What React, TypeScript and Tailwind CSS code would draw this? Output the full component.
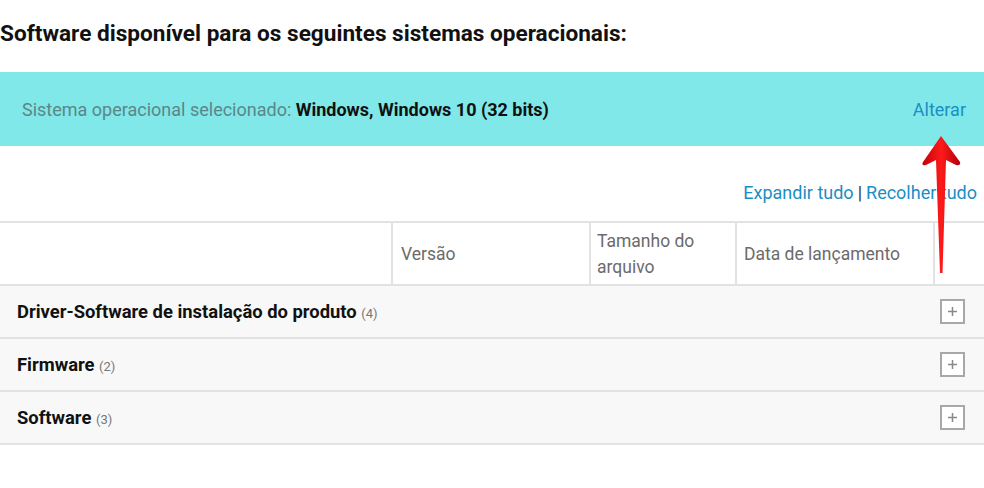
import React from 'react';

const rows = [
    { title: 'Driver-Software de instalação do produto', count: 4 },
    { title: 'Firmware', count: 2 },
    { title: 'Software', count: 3 },
];

export default function App() {
    return (
        <div
            className="relative w-[984px] h-[488px] overflow-hidden bg-white text-[#111]"
            style={{ fontFamily: '"Roboto", "Liberation Sans", sans-serif' }}
        >
            <h1 className="h-[72px] flex items-center pb-[4px] text-[22.6px] font-bold">
                Software disponível para os seguintes sistemas operacionais:
            </h1>

            {/* selected OS bar */}
            <div className="h-[74px] bg-[#80e8e9] flex items-center justify-between pl-[22px] pr-[18px] text-[18px]">
                <p>
                    <span className="text-[#5b8688]">Sistema operacional selecionado: </span>
                    <span className="font-bold">Windows, Windows 10 (32 bits)</span>
                </p>
                <a className="text-[#1b8ec4]">Alterar</a>
            </div>

            <div className="h-[75px] flex items-center justify-end pt-[18px] pr-[7px] text-[18px] text-[#1b8ec4]">
                <a>Expandir tudo</a>
                <span className="text-[#333] mx-[4px]">|</span>
                <a>Recolher tudo</a>
            </div>

            {/* table */}
            <div className="grid grid-cols-[391px_198px_146px_198px_51px] h-[65px] border-y-2 border-[#e2e2e2] text-[17.5px] text-[#6b6b6b] leading-[26px]">
                <div />
                <div className="border-l-2 border-[#e2e2e2] flex items-center px-[8px]">Versão</div>
                <div className="border-l-2 border-[#e2e2e2] flex items-center px-[6px]">
                    <span>Tamanho do<br />arquivo</span>
                </div>
                <div className="border-l-2 border-[#e2e2e2] flex items-center px-[7px]">Data de lançamento</div>
                <div className="border-l-2 border-[#e2e2e2]" />
            </div>

            {rows.map((r) => (
                <div
                    key={r.title}
                    className="h-[53px] flex items-center justify-between bg-[#f8f8f8] border-b-2 border-[#e2e2e2] pl-[17px] pr-[19px]"
                >
                    <p className="text-[18.4px] font-bold">
                        {r.title} <span className="text-[13px] font-normal text-[#777]">({r.count})</span>
                    </p>
                    <div className="w-[25px] h-[25px] border-2 border-[#a8a8a8] bg-white flex items-center justify-center">
                        <svg width="11" height="11" viewBox="0 0 11 11">
                            <path d="M5.5 1v9M1 5.5h9" stroke="#888" strokeWidth="1.5" />
                        </svg>
                    </div>
                </div>
            ))}

            {/* annotation arrow */}
            <svg className="absolute left-[920px] top-[134px]" width="44" height="142" viewBox="0 0 44 142">
                <defs>
                    <linearGradient id="ar" x1="0" x2="1" y1="0" y2="0">
                        <stop offset="0" stopColor="#c4000a" />
                        <stop offset="0.5" stopColor="#ff1a1a" />
                        <stop offset="1" stopColor="#b0000a" />
                    </linearGradient>
                </defs>
                <path
                    d="M21 2 L40 28 Q41 32 36 31 L26 26 L22.5 139 L20 139 L16 26 L6 31 Q1 32 3 28 Z"
                    fill="url(#ar)"
                />
            </svg>
        </div>
    );
}
